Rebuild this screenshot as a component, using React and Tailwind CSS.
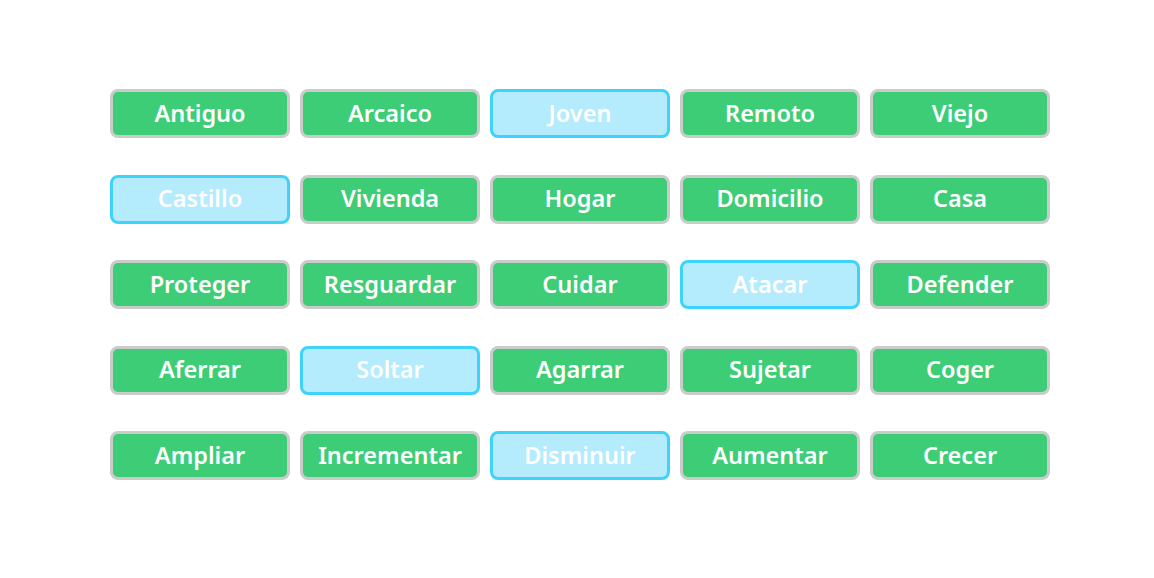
const rows = [
  ["Antiguo", "Arcaico", "Joven", "Remoto", "Viejo"],
  ["Castillo", "Vivienda", "Hogar", "Domicilio", "Casa"],
  ["Proteger", "Resguardar", "Cuidar", "Atacar", "Defender"],
  ["Aferrar", "Soltar", "Agarrar", "Sujetar", "Coger"],
  ["Ampliar", "Incrementar", "Disminuir", "Aumentar", "Crecer"],
];

// the odd one out in each row
const odd = ["Joven", "Castillo", "Atacar", "Soltar", "Disminuir"];

function WordButton({ word }) {
  const isOdd = odd.includes(word);
  return (
    <button
      className={
        isOdd
          ? "h-[49px] w-[180px] rounded-[8px] border-[3px] border-[#3fd3fb] bg-[#b4ebfd] text-white font-semibold text-[23.5px] leading-none"
          : "h-[49px] w-[180px] rounded-[8px] border-[3px] border-[#cbcbcb] bg-[#3dcd77] text-white font-semibold text-[23.5px] leading-none"
      }
    >
      {word}
    </button>
  );
}

export default function App() {
  return (
    <div className="min-h-screen bg-white pl-[110px] pt-[89px]" style={{ fontFamily: '"Noto Sans", sans-serif' }}>
      <div className="grid grid-cols-[repeat(5,180px)] gap-x-[10px] gap-y-[36.5px]">
        {rows.flat().map((w) => (
          <WordButton key={w} word={w} />
        ))}
      </div>
    </div>
  );
}
